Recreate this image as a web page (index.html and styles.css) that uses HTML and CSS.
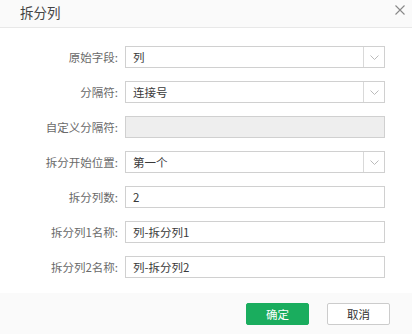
FILE: index.html
```html
<!DOCTYPE html>
<html>
<head>
<meta charset="utf-8">
<link rel="stylesheet" href="styles.css">
</head>
<body>
<div class="dialog">
  <div class="header">
    <span class="title">拆分列</span>
    <svg class="close" width="10" height="10" viewBox="0 0 10 10"><path d="M0.5 0.5L9.5 9.5M9.5 0.5L0.5 9.5" stroke="#888" stroke-width="1.1" fill="none"/></svg>
  </div>
  <div class="body">
    <div class="row"><label class="lbl">原始字段:</label><div class="field select"><span class="val">列</span><span class="arrow"><svg width="9" height="5" viewBox="0 0 9 5"><path d="M0.5 0.5L4.5 4.5L8.5 0.5" stroke="#bbb" stroke-width="1" fill="none"/></svg></span></div></div>
    <div class="row"><label class="lbl">分隔符:</label><div class="field select"><span class="val">连接号</span><span class="arrow"><svg width="9" height="5" viewBox="0 0 9 5"><path d="M0.5 0.5L4.5 4.5L8.5 0.5" stroke="#bbb" stroke-width="1" fill="none"/></svg></span></div></div>
    <div class="row"><label class="lbl">自定义分隔符:</label><div class="field disabled"></div></div>
    <div class="row"><label class="lbl">拆分开始位置:</label><div class="field select"><span class="val">第一个</span><span class="arrow"><svg width="9" height="5" viewBox="0 0 9 5"><path d="M0.5 0.5L4.5 4.5L8.5 0.5" stroke="#bbb" stroke-width="1" fill="none"/></svg></span></div></div>
    <div class="row"><label class="lbl">拆分列数:</label><div class="field"><span class="val">2</span></div></div>
    <div class="row"><label class="lbl">拆分列1名称:</label><div class="field"><span class="val">列-拆分列1</span></div></div>
    <div class="row"><label class="lbl">拆分列2名称:</label><div class="field"><span class="val">列-拆分列2</span></div></div>
  </div>
  <div class="footer">
    <button class="btn ok">确定</button>
    <button class="btn cancel">取消</button>
  </div>
</div>
</body>
</html>
```
FILE: styles.css
```css
* { box-sizing: border-box; }
html, body { margin: 0; padding: 0; background: #fff; }
body { font-family: "Noto Sans CJK SC", "Noto Sans", sans-serif; font-size: 11.5px; color: #333; }
.dialog { width: 412px; height: 334px; display: flex; flex-direction: column; background: #fff; }
.header { height: 28px; background: #fafafa; border-bottom: 1px solid #e8e8e8; display: flex; align-items: center; justify-content: space-between; padding: 0 7px 0 20px; }
.title { font-size: 13.5px; color: #444; line-height: 20px; margin-top: -3px; }
.close { margin-top: -8px; }
.body { flex: 1; padding-top: 18px; display: flex; flex-direction: column; gap: 13px; }
.row { display: flex; align-items: center; height: 22px; }
.lbl { width: 118px; text-align: right; color: #6a6a6a; padding-right: 0; line-height: 22px; }
.field { margin-left: 7px; width: 260px; height: 22px; border: 1px solid #d0d0d0; display: flex; align-items: center; background: #fff; }
.field .val { flex: 1; padding-left: 7px; color: #3a3a3a; line-height: 20px; }
.field.disabled { background: #eeeeee; }
.arrow { width: 21px; height: 20px; border-left: 1px solid #d9d9d9; display: flex; align-items: center; justify-content: center; }
.footer { height: 41px; background: #fafafa; display: flex; justify-content: flex-end; align-items: center; gap: 18px; padding-right: 22px; }
.btn { width: 63px; height: 22px; font-family: inherit; font-size: 11.5px; border-radius: 2px; padding: 0; cursor: pointer; }
.ok { background: #1aad5e; color: #fff; border: 1px solid #1aad5e; }
.cancel { background: #fff; color: #333; border: 1px solid #ccc; }
```
